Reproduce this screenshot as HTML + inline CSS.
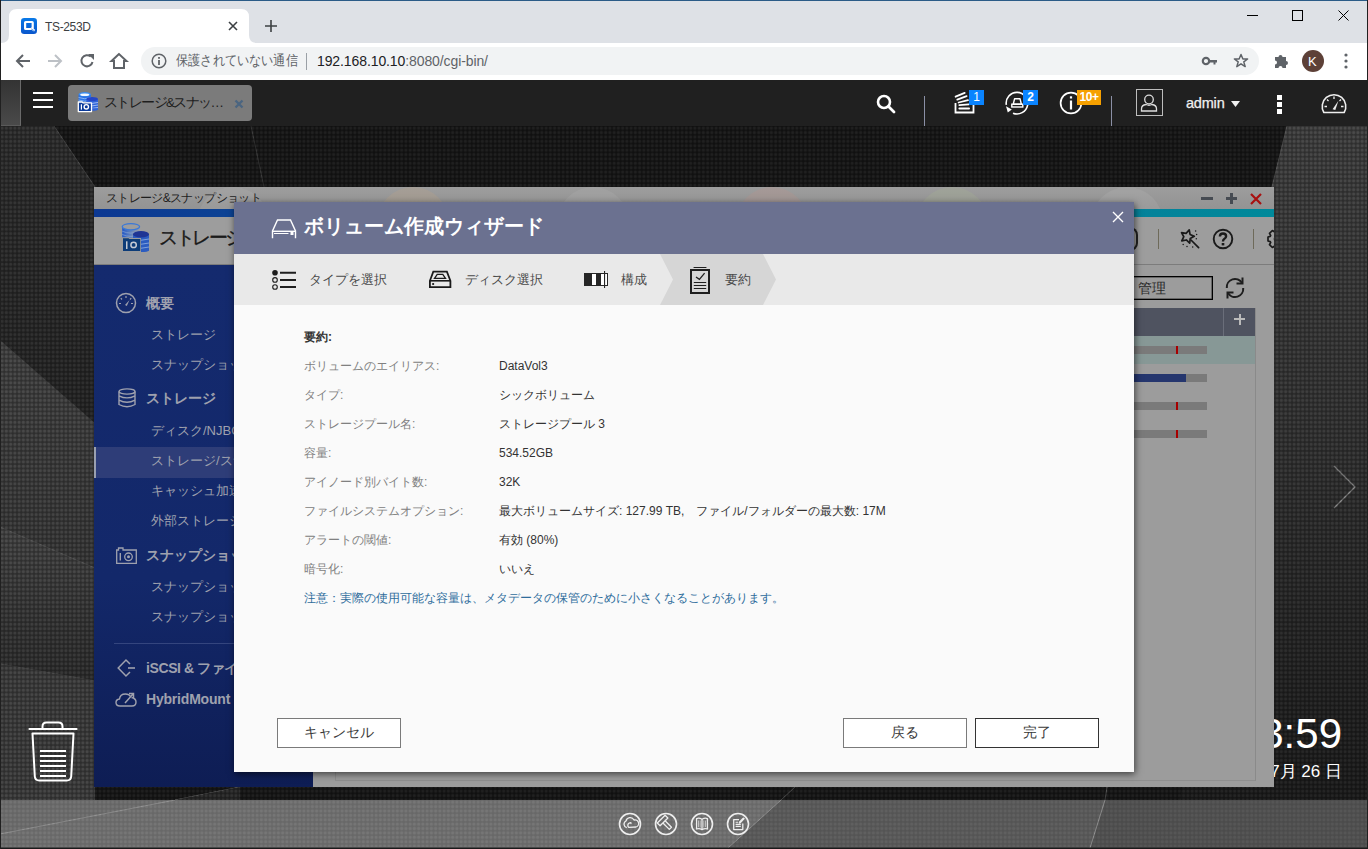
<!DOCTYPE html>
<html><head><meta charset="utf-8">
<style>
*{box-sizing:border-box;margin:0;padding:0}
html,body{width:1368px;height:849px;overflow:hidden;background:#1b1b1b;font-family:"Liberation Sans",sans-serif}
.a{position:absolute}
svg{display:block;position:absolute;overflow:visible}
.t{position:absolute;white-space:nowrap;line-height:1}
/* chrome */
#tabstrip{left:0;top:0;width:1368px;height:43px;background:#dee1e6;border-top:1px solid #2a5b87}
#toolbar{left:0;top:43px;width:1368px;height:36px;background:#fff}
#omni{left:141px;top:47px;width:1118px;height:28px;border-radius:14px;background:#f1f3f4}
/* qts bar */
#qbar{left:0;top:79px;width:1368px;height:47px;background:#202020}
/* desktop */
#desk{left:0;top:126px;width:1368px;height:674px;background:#1b1b1b;overflow:hidden}
#bbar{left:0;top:800px;width:1368px;height:49px;background:#5f5f5f;overflow:hidden}
/* window */
#win{left:94px;top:187px;width:1180px;height:600px;background:#9c9c9c;overflow:hidden}
#modal{left:234px;top:202px;width:900px;height:570px;background:#fafafa;box-shadow:1px 2px 7px rgba(0,0,0,.6);overflow:hidden}
.tex{position:absolute;left:0;top:0;width:100%;height:100%;background-image:radial-gradient(circle at center,rgba(255,255,255,0.045) 0,rgba(255,255,255,0.035) 1.1px,rgba(0,0,0,0.3) 2.1px);background-size:4.25px 4.4px;pointer-events:none}
</style></head><body>

<!-- ============ CHROME ============ -->
<div id="tabstrip" class="a">
  <!-- active tab -->
  <svg width="260" height="43" style="left:0;top:-1px">
    <path d="M1 43 Q9 43 9 35 L9 17 Q9 9 17 9 L241 9 Q249 9 249 17 L249 35 Q249 43 257 43 Z" fill="#fff"/>
  </svg>
  <!-- favicon -->
  <svg width="16" height="16" style="left:21px;top:17px" viewBox="0 0 16 16">
    <defs><linearGradient id="gfav" x1="0" y1="0" x2="0" y2="1"><stop offset="0" stop-color="#0a7ae8"/><stop offset="1" stop-color="#0a56cc"/></linearGradient></defs>
    <rect x="0" y="0" width="16" height="16" rx="3.2" fill="url(#gfav)"/>
    <rect x="4.1" y="4" width="7.6" height="7" rx="0.6" fill="none" stroke="#fff" stroke-width="2.2"/>
    <path d="M9.6 10.2L13.6 12.6" stroke="#fff" stroke-width="2"/>
    <path d="M10.2 10.9L13 12.6" stroke="#0a60d4" stroke-width="0.6"/>
  </svg>
  <div class="t" style="left:45px;top:20px;font-size:12px;letter-spacing:-0.35px;color:#3c4043">TS-253D</div>
  <svg width="10" height="10" style="left:228px;top:20px"><path d="M1 1L9 9M9 1L1 9" stroke="#3c4043" stroke-width="1.6"/></svg>
  <svg width="12" height="12" style="left:265px;top:19px"><path d="M6 0V12M0 6H12" stroke="#3c4043" stroke-width="1.6"/></svg>
  <!-- window controls -->
  <div class="a" style="left:1247px;top:14px;width:11px;height:1px;background:#000"></div>
  <svg width="11" height="11" style="left:1292px;top:9px"><rect x="0.5" y="0.5" width="10" height="10" fill="none" stroke="#000" stroke-width="1"/></svg>
  <svg width="11" height="11" style="left:1338px;top:9px"><path d="M0.5 0.5L10.5 10.5M10.5 0.5L0.5 10.5" stroke="#000" stroke-width="1"/></svg>
</div>
<div id="toolbar" class="a">
  <!-- back -->
  <svg width="16" height="16" style="left:15px;top:10px" viewBox="0 0 16 16"><path d="M15 8H2M8 2L2 8L8 14" fill="none" stroke="#5f6368" stroke-width="2"/></svg>
  <svg width="16" height="16" style="left:47px;top:10px" viewBox="0 0 16 16"><path d="M1 8H14M8 2L14 8L8 14" fill="none" stroke="#bdc1c6" stroke-width="2"/></svg>
  <svg width="16" height="16" style="left:79px;top:10px" viewBox="0 0 16 16"><path d="M13.5 9A5.6 5.6 0 1 1 11.8 3.6" fill="none" stroke="#5f6368" stroke-width="2"/><path d="M9 1L15 1L15 7Z" fill="#5f6368"/></svg>
  <svg width="18" height="18" style="left:110px;top:9px" viewBox="0 0 18 18"><path d="M9 2L1.5 9H4V16H14V9H16.5Z" fill="none" stroke="#5f6368" stroke-width="2" stroke-linejoin="miter"/></svg>
</div>
<div id="omni" class="a">
  <svg width="16" height="16" style="left:10px;top:6px" viewBox="0 0 16 16"><circle cx="8" cy="8" r="6.8" fill="none" stroke="#5f6368" stroke-width="1.5"/><rect x="7.1" y="7" width="1.8" height="5" fill="#5f6368"/><rect x="7.1" y="4" width="1.8" height="1.8" fill="#5f6368"/></svg>
  <div class="t" style="left:35px;top:6px;font-size:14px;color:#5f6368;transform:scaleX(0.87);transform-origin:0 0">保護されていない通信</div>
  <div class="a" style="left:165px;top:6px;width:1px;height:17px;background:#9aa0a6"></div>
  <div class="t" style="left:176px;top:7px;font-size:14px;letter-spacing:-0.1px;color:#202124">192.168.10.10<span style="color:#5f6368">:8080/cgi-bin/</span></div>
  <!-- key -->
  <svg width="16" height="10" style="left:1061px;top:9px" viewBox="0 0 16 10"><circle cx="4" cy="5" r="3.2" fill="none" stroke="#5f6368" stroke-width="2.2"/><path d="M7 4H15V6.5H13.5V8.5H11.5V6.5H7Z" fill="#5f6368"/></svg>
  <!-- star -->
  <svg width="16" height="16" style="left:1092px;top:6px" viewBox="0 0 16 16"><path d="M8 1.5L9.9 6H14.6L10.8 8.9L12.2 13.6L8 10.8L3.8 13.6L5.2 8.9L1.4 6H6.1Z" fill="none" stroke="#5f6368" stroke-width="1.5" stroke-linejoin="round"/></svg>
</div>
<div class="a" style="left:0;top:43px;width:1368px;height:36px">
  <!-- puzzle -->
  <svg width="16" height="16" style="left:1273px;top:10px" viewBox="0 0 16 16"><path d="M2 4H5.5A2 2 0 1 1 9.5 4H13V8A2 2 0 1 1 13 12V15H9.5A2 2 0 1 0 5.5 15H2V11.5A2 2 0 1 0 2 7.5Z" fill="#5f6368"/></svg>
  <div class="a" style="left:1302px;top:7px;width:22px;height:22px;border-radius:50%;background:#5d4037"></div>
  <div class="t" style="left:1308px;top:12px;font-size:13px;color:#fff">K</div>
  <svg width="4" height="16" style="left:1344px;top:10px"><circle cx="2" cy="2" r="1.6" fill="#5f6368"/><circle cx="2" cy="8" r="1.6" fill="#5f6368"/><circle cx="2" cy="14" r="1.6" fill="#5f6368"/></svg>
</div>

<!-- ============ QTS BAR ============ -->
<div id="qbar" class="a">
  <div class="a" style="left:0;top:1px;width:21px;height:46px;background:linear-gradient(180deg,#333,#4a4a4a);border-right:1px solid #6a6a6a;border-bottom:1px solid #5a5a5a"></div>
  <div class="a" style="left:33px;top:12.7px;width:19.5px;height:2.5px;background:#fff"></div>
  <div class="a" style="left:33px;top:19.7px;width:19.5px;height:2.5px;background:#fff"></div>
  <div class="a" style="left:33px;top:26.7px;width:19.5px;height:2.5px;background:#fff"></div>
  <!-- app tab -->
  <div class="a" style="left:68px;top:6px;width:184px;height:36px;border-radius:4px;background:#7b7b7b"></div>
  <svg width="22" height="22" style="left:77px;top:13px" viewBox="0 0 22 22">
    <rect x="1.6" y="2.2" width="12.3" height="7.5" fill="#2a72e6"/>
    <path d="M1.6 5.5Q7.75 8 13.9 5.5M1.6 8Q7.75 10.5 13.9 8" fill="none" stroke="#8fbaf5" stroke-width="0.9"/>
    <ellipse cx="7.75" cy="2.3" rx="6.15" ry="2.2" fill="#3d8ef0"/>
    <ellipse cx="7.75" cy="2.7" rx="4.6" ry="1.3" fill="#f4f8ff"/>
    <rect x="9.3" y="7" width="11.7" height="10.5" fill="#2f62d8"/>
    <path d="M9.3 10.5Q15 12.3 21 10.5M9.3 13Q15 14.8 21 13M9.3 15.5Q15 17.3 21 15.5" fill="none" stroke="#a8c4f5" stroke-width="0.9"/>
    <ellipse cx="15.15" cy="17.5" rx="5.85" ry="1.3" fill="#2f62d8"/>
    <ellipse cx="15.15" cy="7" rx="5.85" ry="2" fill="#2446c8"/>
    <path d="M1.3 19.6V10H5.2L6 10.8H14.5V19.6Z" fill="#0a3a9a" stroke="#fff" stroke-width="1.3" stroke-linejoin="round"/>
    <rect x="3.8" y="12.3" width="1.2" height="5.3" fill="#fff"/>
    <circle cx="9.3" cy="14.8" r="2.2" fill="none" stroke="#fff" stroke-width="1.4"/>
  </svg>
  <div class="t" style="left:104px;top:17px;font-size:13.5px;letter-spacing:-1.6px;color:#1e1e1e">ストレージ&amp;スナッ<span style="letter-spacing:0">…</span></div>
  <svg width="10" height="10" style="left:234px;top:20px"><path d="M1.5 1.5L8.5 8.5M8.5 1.5L1.5 8.5" stroke="#4b6580" stroke-width="2.4"/></svg>

  <!-- search -->
  <svg width="20" height="20" style="left:876px;top:15px" viewBox="0 0 20 20"><circle cx="8" cy="8" r="6" fill="none" stroke="#fff" stroke-width="2.6"/><path d="M12.5 12.5L18 18" stroke="#fff" stroke-width="2.8" stroke-linecap="round"/></svg>
  <div class="a" style="left:924px;top:17px;width:1px;height:30px;background:#8b90a6"></div>
  <!-- tasks -->
  <svg width="22" height="22" style="left:954px;top:13px" viewBox="0 0 22 22">
    <path d="M1.5 11V20.5H19.5V13" fill="none" stroke="#fff" stroke-width="1.8"/>
    <path d="M1.6 4.7L10.7 0.9M3.3 7.6L12.6 4.1M4.6 10.5L14 8.1M5.3 13.1L14.8 12.3M5.3 16.5H15.1" stroke="#fff" stroke-width="1.8" stroke-linecap="round"/>
  </svg>
  <div class="a" style="left:969px;top:11px;width:15px;height:15px;background:#0a84ff"></div>
  <div class="t" style="left:969px;top:12px;width:15px;text-align:center;font-size:12px;color:#fff">1</div>
  <!-- sync -->
  <svg width="24" height="24" style="left:1005px;top:13px" viewBox="0 0 24 24">
    <path d="M1.3 12.8A10.8 10.8 0 1 1 8 21.2" fill="none" stroke="#fff" stroke-width="1.6"/>
    <path d="M1.0 14.2L6.8 17.4L2.8 20.6Z" fill="#fff"/>
    <path d="M8.2 12.2L9.6 6.8H15L16.4 12.2Z" fill="none" stroke="#fff" stroke-width="1.4" stroke-linejoin="round"/>
    <rect x="6.8" y="12.2" width="11" height="2.8" fill="none" stroke="#fff" stroke-width="1.4"/>
  </svg>
  <div class="a" style="left:1023px;top:11px;width:15px;height:15px;background:#0a84ff"></div>
  <div class="t" style="left:1023px;top:12px;width:15px;text-align:center;font-size:12px;font-weight:bold;color:#fff">2</div>
  <!-- info -->
  <svg width="24" height="24" style="left:1059px;top:12px" viewBox="0 0 24 24">
    <circle cx="12" cy="12" r="10.4" fill="none" stroke="#fff" stroke-width="1.7"/>
    <rect x="10.9" y="9.5" width="2.2" height="9" fill="#fff"/><rect x="10.9" y="5.3" width="2.2" height="2.2" fill="#fff"/>
  </svg>
  <div class="a" style="left:1077px;top:11px;width:24px;height:15px;background:#f6a000"></div>
  <div class="t" style="left:1077px;top:12px;width:24px;text-align:center;font-size:12px;font-weight:bold;color:#fff;letter-spacing:-0.4px">10+</div>
  <div class="a" style="left:1111px;top:17px;width:1px;height:30px;background:#8b90a6"></div>
  <!-- user -->
  <div class="a" style="left:1136px;top:10px;width:27px;height:27px;border:1px solid #bdbdbd"></div>
  <svg width="18" height="18" style="left:1140px;top:15px" viewBox="0 0 18 18"><circle cx="9" cy="5.5" r="4.3" fill="none" stroke="#ddd" stroke-width="1.3"/><path d="M1.5 17V15Q1.5 11 6 10.5Q9 12 12 10.5Q16.5 11 16.5 15V17Z" fill="none" stroke="#ddd" stroke-width="1.3"/></svg>
  <div class="t" style="left:1186px;top:17px;font-size:14.5px;letter-spacing:-0.2px;color:#f0f0f0;-webkit-text-stroke:0.25px #f0f0f0">admin</div>
  <svg width="9" height="6" style="left:1231px;top:101px;top:22px"><path d="M0 0H9L4.5 6Z" fill="#f0f0f0"/></svg>
  <div class="a" style="left:1277px;top:16px;width:5px;height:5px;background:#fff"></div>
  <div class="a" style="left:1277px;top:23px;width:5px;height:5px;background:#fff"></div>
  <div class="a" style="left:1277px;top:30px;width:5px;height:5px;background:#fff"></div>
  <!-- gauge -->
  <svg width="26" height="21" style="left:1321px;top:15px" viewBox="0 0 26 21">
    <path d="M2.84 18.5A11.8 11.8 0 1 1 23.16 18.5Z" fill="none" stroke="#eee" stroke-width="1.6" stroke-linejoin="round"/>
    <path d="M13 2.5V5M6 5.5L7.5 7M20 5.5L18.5 7M3.5 12.5H6M20 12.5H22.5" stroke="#eee" stroke-width="1.3"/>
    <path d="M11.6 15.2L17.4 6.8L14.3 16Z" fill="#eee"/>
  </svg>
</div>

<div class="a" style="left:0;top:79px;width:1368px;height:1px;background:#fff"></div>
<!-- ============ DESKTOP ============ -->
<div id="desk" class="a">
  <svg width="1368" height="674" style="left:0;top:0">
    <defs>
      <linearGradient id="gR" x1="0" y1="0" x2="0" y2="1">
        <stop offset="0" stop-color="#434343"/><stop offset="0.45" stop-color="#353535"/><stop offset="0.85" stop-color="#222"/><stop offset="1" stop-color="#1c1c1c"/>
      </linearGradient>
      <linearGradient id="gL2" x1="0" y1="0" x2="0" y2="1">
        <stop offset="0" stop-color="#464646"/><stop offset="1" stop-color="#3a3a3a"/>
      </linearGradient>
      <linearGradient id="gL3" x1="0" y1="0" x2="0" y2="1">
        <stop offset="0" stop-color="#484848"/><stop offset="1" stop-color="#2e2e2e"/>
      </linearGradient>
      <linearGradient id="gL1" x1="0" y1="0" x2="0" y2="1">
        <stop offset="0" stop-color="#303030"/><stop offset="1" stop-color="#262626"/>
      </linearGradient>
    </defs>
    <rect x="0" y="0" width="1368" height="674" fill="#171717"/>
    <!-- left upper facet -->
    <path d="M0 0H54L95 61L95 297L0 214Z" fill="url(#gL1)"/>
    <path d="M54 0L95 61" stroke="#4a4a4a" stroke-width="1"/>
    <path d="M251 0L264 61" stroke="#3a3a3a" stroke-width="1"/>
    <!-- left middle facet -->
    <path d="M0 214L95 297V442L0 401Z" fill="url(#gL2)"/>
    <path d="M0 401L95 442V555L0 538Z" fill="url(#gL3)"/>
    <path d="M0 401L95 442" stroke="#555" stroke-width="1"/>
    <path d="M0 538L95 555" stroke="#505050" stroke-width="1"/>
    <path d="M0 538L95 555V674H0Z" fill="#404040"/>
    <!-- right facet -->
    <path d="M1287 0H1368V674H1180L1272 61Z" fill="url(#gR)"/>
    <path d="M1287 0L1272 61" stroke="#555" stroke-width="1"/>
    <path d="M175 674L240 661" stroke="#666" stroke-width="1"/><path d="M0 674H175L240 661V674Z" fill="#2a2a2a"/>
    <path d="M795 661L781 674" stroke="#555" stroke-width="1"/>
    <path d="M1107 661L1105 674" stroke="#555" stroke-width="1"/>
    <!-- chevron -->
    <path d="M1334 340L1355 361L1334 382" fill="none" stroke="#8a8a8a" stroke-width="1.3"/>
  </svg>
  <div class="tex"></div>
  <!-- trash -->
  <svg width="50" height="64" style="left:28px;top:594px" viewBox="0 0 50 64">
    <path d="M14.5 8.5V6.5Q14.5 2.5 18.5 2.5H30.5Q34.5 2.5 34.5 6.5V8.5" fill="none" stroke="#fff" stroke-width="2"/>
    <path d="M1.5 9H48.5" stroke="#fff" stroke-width="2.2" stroke-linecap="round"/>
    <path d="M4.5 13.5H45.5L43.2 56.5Q42.8 60.5 38.8 60.5H11.2Q7.2 60.5 6.8 56.5Z" fill="none" stroke="#fff" stroke-width="2" stroke-linejoin="round"/>
    <path d="M12 31H38M12 36H38M12 41H38M12 46H38M12 51H38M12 56H38" stroke="#fff" stroke-width="2"/>
  </svg>
  <!-- clock -->
  <div class="t" style="left:1192px;top:587px;font-size:42px;color:#fff;width:150px;text-align:right">3:59</div>
  <div class="t" style="left:1192px;top:637px;font-size:17px;color:#fff;width:150px;text-align:right">7月 26 日</div>
</div>
<div id="bbar" class="a">
  <svg width="1368" height="49" style="left:0;top:0">
    <rect width="1368" height="49" fill="#5e5e5e"/>
    <path d="M0 0H175L0 34Z" fill="#717171"/>
    <path d="M0 34L175 0H781L728 48H0Z" fill="#747474"/>
    <path d="M781 0H1105L1090 48H728Z" fill="#5e5e5e"/>
    <path d="M1105 0H1368V48H1090Z" fill="#545454"/>
    <path d="M0 34L175 0M781 0L728 48M1105 0L1090 48" stroke="#949494" stroke-width="1"/>
    <rect y="47.5" width="1368" height="1.5" fill="#1a1a1a"/>
  </svg>
  <div class="tex" style="height:47px;opacity:.35"></div>
  <svg width="1368" height="49" style="left:0;top:0">
    <g fill="none" stroke="#eee" stroke-width="1.6">
      <circle cx="630" cy="24" r="10.5"/><circle cx="666" cy="24" r="10.5"/><circle cx="702" cy="24" r="10.5"/><circle cx="738" cy="24" r="10.5"/>
    </g>
    <g fill="none" stroke="#eee" stroke-width="1.3" stroke-linejoin="round">
      <path d="M626.8 27.7A3.6 3.6 0 0 1 626 21A4.3 4.3 0 0 1 634 20A3.5 3.5 0 0 1 636 27L628.8 27.4A2.6 2.6 0 0 1 629.8 22.8A1.5 1.5 0 0 1 631.4 23.6"/>
      <path d="M667.9 18L665.1 15.2L657.3 23L660.1 25.8Z"/>
      <path d="M665.1 20.8L671.5 27.2L669.3 29.4L662.9 23"/>
      <path d="M702 19.2Q699 17.6 696.6 18.6V29Q699.3 28 702 29.6Q704.7 28 707.4 29V18.6Q705 17.6 702 19.2Z"/>
      <path d="M702 19.2V29.6"/>
      <path d="M698.5 20.5V27.2M700.2 20.5V27.5M703.8 20.5V27.5M705.5 20.5V27.2" stroke-width="0.8" opacity="0.8"/>
      <path d="M739 19.6H733.7V29.6H742.8V23.5"/>
      <path d="M735.6 22.2H738M735.6 24.4H740.8M735.6 26.4H740.8" stroke-width="1.1"/>
      <path d="M739.8 22.6L743.6 18.6" stroke-width="2.2" stroke-linecap="round"/>
    </g>
  </svg>
</div>

<!-- ============ WINDOW ============ -->
<div id="win" class="a">
  <!-- title bar -->
  <div class="a" style="left:0;top:0;width:1180px;height:22px;background:linear-gradient(180deg,#9d9d9d,#939393)"></div>
  <svg width="1180" height="22" style="left:0;top:0">
    <g opacity="0.13">
      <circle cx="139" cy="36" r="36" fill="#c8c8c8"/>
      <circle cx="319" cy="36" r="36" fill="#e6b070"/>
      <circle cx="499" cy="36" r="36" fill="#c8c8c8"/>
      <circle cx="678" cy="36" r="36" fill="#e08a7a"/>
      <circle cx="858" cy="36" r="36" fill="#b8d08a"/>
      <circle cx="1033" cy="36" r="36" fill="#d0d0d0"/>
    </g>
  </svg>
  <div class="t" style="left:12px;top:5px;font-size:12px;letter-spacing:-0.65px;color:#1e1e1e">ストレージ&amp;スナップショット</div>
  <div class="a" style="left:1107px;top:10px;width:12px;height:3px;background:#464b52"></div>
  <div class="a" style="left:1132px;top:10px;width:11px;height:3px;background:#464b52"></div>
  <div class="a" style="left:1136px;top:6px;width:3px;height:11px;background:#464b52"></div>
  <svg width="12" height="12" style="left:1156px;top:6px"><path d="M1 1L11 11M11 1L1 11" stroke="#a81010" stroke-width="2.2"/></svg>
  <!-- strip -->
  <div class="a" style="left:0;top:22px;width:1180px;height:8px;background:linear-gradient(90deg,#0c3892 0%,#0c4a96 20%,#0a7a9a 75%,#00899a 100%)"></div>
  <!-- header -->
  <div class="a" style="left:0;top:30px;width:1180px;height:48px;background:#9d9d9d;border-bottom:1px solid #7c7c7c"></div>
  <svg width="28" height="30" style="left:28px;top:36px" viewBox="0 0 28 30">
    <defs><linearGradient id="gbk" x1="0" y1="0" x2="1" y2="0"><stop offset="0" stop-color="#1f56c8"/><stop offset="0.55" stop-color="#3a6fd0" stop-opacity="0.55"/><stop offset="1" stop-color="#6a8fd0" stop-opacity="0.15"/></linearGradient></defs>
    <path d="M0.2 3.7V14.5Q8.8 18.5 17.6 14.5V3.7A8.7 3.3 0 0 1 0.2 3.7Z" fill="url(#gbk)"/>
    <path d="M0.2 8.2Q8.8 12 17.6 8.2M0.2 11.5Q8.8 15.3 17.6 11.5" fill="none" stroke="#9db4d8" stroke-width="0.9" opacity="0.6"/>
    <ellipse cx="8.9" cy="3.7" rx="8.7" ry="3.1" fill="none" stroke="#3a78d8" stroke-width="1.3"/>
    <rect x="11" y="11.2" width="16" height="16.5" fill="#2c5cc0"/>
    <path d="M11 16Q19 18.5 27 16M11 20Q19 22.5 27 20M11 24Q19 26.5 27 24" fill="none" stroke="#7ea0dc" stroke-width="1"/>
    <ellipse cx="19" cy="27.5" rx="8" ry="1.6" fill="#2c5cc0"/>
    <ellipse cx="19" cy="11.2" rx="8" ry="3.2" fill="#1f3594"/>
    <path d="M0.3 29V14.2H7L8 15H19V29Z" fill="#9d9d9d"/>
    <path d="M1 28V15.2H6.6L7.5 16H18.2V28Z" fill="#0d3c78"/>
    <rect x="4" y="18.3" width="1.5" height="7.7" fill="#c4cad4"/>
    <circle cx="11.6" cy="21.9" r="2.7" fill="none" stroke="#c4cad4" stroke-width="1.5"/>
  </svg>
  <div class="t" style="left:65px;top:41px;font-size:19px;letter-spacing:-2.4px;color:#1a1a1a;-webkit-text-stroke:0.3px #1a1a1a">ストレージ&amp;スナップショット</div>
  <!-- toolbar right -->
  <div class="a" style="left:1034px;top:40px;width:10px;height:24px;border:2px solid #222;border-left:none;border-radius:0 8px 8px 0"></div>
  <div class="a" style="left:1064px;top:42px;width:1px;height:20px;background:#6e6a5a"></div>
  <svg width="22" height="22" style="left:1086px;top:42px" viewBox="0 0 22 22">
    <path d="M9.23 0.87L10.06 5.45L14.30 7.36L10.20 9.56L9.69 14.18L6.34 10.96L1.78 11.91L3.80 7.72L1.50 3.69L6.10 4.31Z" fill="none" stroke="#1a1a1a" stroke-width="1.7" stroke-linejoin="round"/>
    <path d="M11 11L18.6 18.6" stroke="#1a1a1a" stroke-width="1.7" stroke-linecap="round"/>
    <g fill="#1a1a1a"><circle cx="15.6" cy="2.1" r=".75"/><circle cx="16.6" cy="5.5" r=".75"/><circle cx="16.3" cy="9.8" r=".75"/><circle cx="3.2" cy="15.4" r=".75"/><circle cx="7" cy="17.4" r=".75"/><circle cx="12.7" cy="18" r=".75"/></g>
  </svg>
  <svg width="22" height="22" style="left:1118px;top:41px" viewBox="0 0 22 22">
    <circle cx="11" cy="11" r="9.3" fill="none" stroke="#1a1a1a" stroke-width="1.9"/>
    <path d="M7.9 8.6Q7.9 5.5 11 5.5Q14.1 5.5 14.1 8.3Q14.1 10 12.2 11Q11 11.7 11 13.4" fill="none" stroke="#1a1a1a" stroke-width="2.4"/>
    <rect x="9.7" y="15" width="2.6" height="2.4" fill="#1a1a1a"/>
  </svg>
  <div class="a" style="left:1159px;top:42px;width:1px;height:20px;background:#6e6a5a"></div>
  <svg width="30" height="25" style="left:1170px;top:40px" viewBox="0 0 30 25"><path d="M24.00 9.97L24.00 14.03L21.78 14.58L21.33 15.68L22.50 17.64L19.64 20.50L17.68 19.33L16.58 19.78L16.03 22.00L11.97 22.00L11.42 19.78L10.32 19.33L8.36 20.50L5.50 17.64L6.67 15.68L6.22 14.58L4.00 14.03L4.00 9.97L6.22 9.42L6.67 8.32L5.50 6.36L8.36 3.50L10.32 4.67L11.42 4.22L11.97 2.00L16.03 2.00L16.58 4.22L17.68 4.67L19.64 3.50L22.50 6.36L21.33 8.32L21.78 9.42Z" fill="none" stroke="#1a1a1a" stroke-width="1.7" stroke-linejoin="round"/><circle cx="14" cy="12" r="3.5" fill="none" stroke="#1a1a1a" stroke-width="1.6"/></svg>
  <!-- sidebar -->
  <div class="a" style="left:0;top:78px;width:219px;height:522px;background:linear-gradient(180deg,#142a6e 0%,#13286a 60%,#0e1d54 100%)"></div>
  <!-- content -->
  <div class="a" style="left:241px;top:89px;width:921px;height:505px;border-left:1px solid #8e8e8e;border-bottom:1px solid #8e8e8e"></div>
  <div class="a" style="left:920px;top:89px;width:199px;height:24px;border:1px solid #000;box-shadow:inset 0 0 0 0.5px #333"></div>
  <div class="t" style="left:1044px;top:94px;font-size:14px;color:#2a2a2a">管理</div>
  <svg width="20" height="24" style="left:1131px;top:89px" viewBox="0 0 20 24">
    <path d="M17.5 1.5V7.5H11.5" fill="none" stroke="#1e1e1e" stroke-width="2"/>
    <path d="M17 7A8.2 8.2 0 0 0 1.8 12" fill="none" stroke="#1e1e1e" stroke-width="2"/>
    <path d="M2.5 22.5V16.5H8.5" fill="none" stroke="#1e1e1e" stroke-width="2"/>
    <path d="M3 17A8.2 8.2 0 0 0 18.2 12" fill="none" stroke="#1e1e1e" stroke-width="2"/>
  </svg>
  <!-- table -->
  <div class="a" style="left:241px;top:121px;width:920px;height:28px;background:#4f5360"></div>
  <div class="a" style="left:1129px;top:121px;width:1px;height:28px;background:#6a6e7a"></div>
  <div class="a" style="left:1140px;top:131px;width:11px;height:2px;background:#bababa"></div>
  <div class="a" style="left:1144.5px;top:126.5px;width:2px;height:11px;background:#bababa"></div>
  <div class="a" style="left:241px;top:149px;width:920px;height:28px;background:#879896"></div>
  <div class="a" style="left:1161px;top:121px;width:1px;height:473px;background:#8a8a8a"></div>
  <!-- bars -->
  <div class="a" style="left:1000px;top:159px;width:113px;height:8px;background:#7a7a7a"></div>
  <div class="a" style="left:1082px;top:159px;width:2px;height:8px;background:#a80000"></div>
  <div class="a" style="left:1000px;top:187px;width:113px;height:8px;background:#7a7a7a"></div>
  <div class="a" style="left:1000px;top:187px;width:92px;height:8px;background:#25366e"></div>
  <div class="a" style="left:1000px;top:215px;width:113px;height:8px;background:#7a7a7a"></div>
  <div class="a" style="left:1082px;top:215px;width:2px;height:8px;background:#a80000"></div>
  <div class="a" style="left:1000px;top:243px;width:113px;height:8px;background:#7a7a7a"></div>
  <div class="a" style="left:1082px;top:243px;width:2px;height:8px;background:#a80000"></div>
  <!-- sidebar items (coords relative to window: x-94, y-187) -->
  <div class="a" style="left:0;top:260px;width:219px;height:31px;background:#2e3d78"></div>
  <div class="a" style="left:0;top:260px;width:2px;height:31px;background:#9aa0b0"></div>
  <svg width="22" height="22" style="left:21px;top:105px" viewBox="0 0 22 22">
    <circle cx="11" cy="11" r="9.5" fill="none" stroke="#9fa1ae" stroke-width="1.5"/>
    <path d="M11 4V6M5.8 6.2L7 7.5M16.2 6.2L15 7.5M4 11.5H6M16 11.5H18" stroke="#9fa1ae" stroke-width="1.2"/>
    <path d="M10 13L14.5 8L11.8 14Z" fill="#9fa1ae"/>
  </svg>
  <div class="t" style="left:52px;top:109px;font-size:14px;font-weight:bold;color:#9fa1ae">概要</div>
  <div class="t" style="left:57px;top:141px;font-size:13px;color:#9fa1ae">ストレージ</div>
  <div class="t" style="left:57px;top:171px;font-size:13px;color:#9fa1ae">スナップショット</div>
  <svg width="20" height="20" style="left:23px;top:201px" viewBox="0 0 20 20">
    <ellipse cx="10" cy="3.5" rx="8" ry="2.6" fill="none" stroke="#9fa1ae" stroke-width="1.4"/>
    <path d="M2 3.5V16.5Q10 21 18 16.5V3.5M2 7.8Q10 12 18 7.8M2 12.2Q10 16.4 18 12.2" fill="none" stroke="#9fa1ae" stroke-width="1.4"/>
  </svg>
  <div class="t" style="left:52px;top:204px;font-size:14px;font-weight:bold;color:#9fa1ae">ストレージ</div>
  <div class="t" style="left:57px;top:237px;font-size:13px;color:#9fa1ae">ディスク/NJBOD</div>
  <div class="t" style="left:57px;top:267px;font-size:13px;color:#9fa1ae">ストレージ/スナップショット</div>
  <div class="t" style="left:57px;top:297px;font-size:13px;color:#9fa1ae">キャッシュ加速</div>
  <div class="t" style="left:57px;top:327px;font-size:13px;color:#9fa1ae">外部ストレージ</div>
  <svg width="21" height="17" style="left:22px;top:360px" viewBox="0 0 21 17">
    <path d="M0.7 16.3V3H2.5V1H7V3H20.3V16.3Z" fill="none" stroke="#9fa1ae" stroke-width="1.3"/>
    <rect x="3.6" y="6" width="1.4" height="7.5" fill="#9fa1ae"/>
    <circle cx="12.5" cy="9.8" r="3.8" fill="none" stroke="#9fa1ae" stroke-width="1.3"/><circle cx="12.5" cy="9.8" r="1.5" fill="#9fa1ae"/>
  </svg>
  <div class="t" style="left:52px;top:361px;font-size:14px;font-weight:bold;color:#9fa1ae">スナップショット</div>
  <div class="t" style="left:57px;top:393px;font-size:13px;color:#9fa1ae">スナップショット</div>
  <div class="t" style="left:57px;top:423px;font-size:13px;color:#9fa1ae">スナップショット</div>
  <div class="a" style="left:20px;top:456px;width:199px;height:1px;background:#34457e"></div>
  <svg width="20" height="20" style="left:23px;top:472px" viewBox="0 0 20 20">
    <path d="M13 5L9 1L1.2 9L9 17L13 13" fill="none" stroke="#9fa1ae" stroke-width="1.5"/>
    <path d="M11 9H18" stroke="#9fa1ae" stroke-width="1.6"/>
  </svg>
  <div class="t" style="left:52px;top:474px;font-size:14px;font-weight:bold;letter-spacing:-0.4px;color:#9fa1ae">iSCSI &amp; ファイバーチャネル</div>
  <svg width="22" height="16" style="left:21px;top:504px" viewBox="0 0 22 16">
    <path d="M5 15Q1 15 1 11.5Q1 8.5 4.5 8Q5 3 10.5 3Q14 3 15.5 5.5" fill="none" stroke="#9fa1ae" stroke-width="1.4"/>
    <path d="M16.5 6.5Q21 7.5 21 11Q21 15 17 15H5" fill="none" stroke="#9fa1ae" stroke-width="1.4"/>
    <path d="M10 12L18 3M14 2.5H18.5V7" fill="none" stroke="#9fa1ae" stroke-width="1.5"/>
  </svg>
  <div class="t" style="left:52px;top:505px;font-size:14px;font-weight:bold;letter-spacing:-0.2px;color:#9fa1ae">HybridMount</div>
</div>

<!-- ============ MODAL ============ -->
<div id="modal" class="a">
  <div class="a" style="left:0;top:0;width:900px;height:52px;background:#6b7190"></div>
  <svg width="26" height="20" style="left:37px;top:17px" viewBox="0 0 26 20">
    <path d="M1.5 19.2V12L6.5 1H19.5L24.5 12V19.2" fill="none" stroke="#fff" stroke-width="1.4"/>
    <path d="M1.5 12.3H24.5" stroke="#fff" stroke-width="1.4"/>
    <path d="M3 14.5H17.5" stroke="#fff" stroke-width="1"/>
    <rect x="19.5" y="13" width="3" height="3" fill="#fff"/>
  </svg>
  <div class="t" style="left:70px;top:14px;font-size:20px;font-weight:bold;color:#fff">ボリューム作成ウィザード</div>
  <svg width="12" height="12" style="left:878px;top:9px"><path d="M1 1L11 11M11 1L1 11" stroke="#fff" stroke-width="1.4"/></svg>
  <!-- steps -->
  <div class="a" style="left:0;top:52px;width:900px;height:51px;background:#e9e9e9"></div>
  <svg width="900" height="51" style="left:0;top:52px">
    <path d="M426 0H529L542 25.5L529 51H426L439 25.5Z" fill="#d6d6d6"/>
  </svg>
  <svg width="26" height="20" style="left:37px;top:68px" viewBox="0 0 26 20">
    <circle cx="4" cy="2.8" r="2.8" fill="#1e1e1e"/>
    <circle cx="4" cy="9.9" r="2.3" fill="none" stroke="#1e1e1e" stroke-width="1.1"/>
    <circle cx="4" cy="17" r="2.3" fill="none" stroke="#1e1e1e" stroke-width="1.1"/>
    <path d="M9 2.8H25M9 9.9H25M9 17H25" stroke="#1e1e1e" stroke-width="2"/>
  </svg>
  <div class="t" style="left:75px;top:71px;font-size:13px;color:#4a4a4a">タイプを選択</div>
  <svg width="24" height="20" style="left:194px;top:68px" viewBox="0 0 24 20">
    <path d="M1.9 17.1V10.8L5.3 1.7H18.9L22.4 10.8V17.1Z" fill="none" stroke="#1a1a1a" stroke-width="1.8" stroke-linejoin="miter"/>
    <path d="M1.9 10.8H22.4" stroke="#1a1a1a" stroke-width="1.6"/>
    <path d="M6.5 8.4L9.2 4.4H14.8L17.5 8.4Z" fill="none" stroke="#1a1a1a" stroke-width="1.3"/>
    <rect x="4.2" y="13.1" width="1.9" height="1.8" fill="#1a1a1a"/>
  </svg>
  <div class="t" style="left:231px;top:71px;font-size:13px;color:#4a4a4a">ディスク選択</div>
  <svg width="26" height="19" style="left:349px;top:68px" viewBox="0 0 26 19">
    <rect x="1" y="3" width="24" height="13" fill="#262626"/>
    <rect x="9" y="4" width="4" height="11" fill="#fff"/>
    <rect x="18" y="4" width="3" height="11" fill="#fff"/>
    <rect x="22" y="4" width="2" height="11" fill="#fff"/>
    <rect x="21" y="1" width="1.1" height="17" fill="#262626"/>
  </svg>
  <div class="t" style="left:387px;top:71px;font-size:13px;color:#4a4a4a">構成</div>
  <svg width="20" height="28" style="left:456px;top:64px" viewBox="0 0 20 28">
    <path d="M4 1.5H16" stroke="#1e1e1e" stroke-width="1.1" stroke-linecap="round"/>
    <rect x="1" y="4" width="18" height="23" fill="none" stroke="#1e1e1e" stroke-width="2"/>
    <path d="M6 11L9.4 13.4L14.6 7.2" fill="none" stroke="#1e1e1e" stroke-width="1.3"/>
    <path d="M4.2 16.5H15.8M4.2 19.5H15.8M4.2 22.5H15.8" stroke="#1e1e1e" stroke-width="1" stroke-linecap="round"/>
  </svg>
  <div class="t" style="left:491px;top:71px;font-size:13px;color:#4a4a4a">要約</div>
  <!-- body -->
  <div class="t" style="left:70px;top:129px;font-size:12px;font-weight:bold;color:#333">要約:</div>
  <div class="t" style="left:70px;top:158px;font-size:12px;color:#808080">ボリュームのエイリアス:</div>
  <div class="t" style="left:265px;top:158px;font-size:12px;color:#333">DataVol3</div>
  <div class="t" style="left:70px;top:187px;font-size:12px;color:#808080">タイプ:</div>
  <div class="t" style="left:265px;top:187px;font-size:12px;color:#333">シックボリューム</div>
  <div class="t" style="left:70px;top:216px;font-size:12px;color:#808080">ストレージプール名:</div>
  <div class="t" style="left:265px;top:216px;font-size:12px;color:#333">ストレージプール 3</div>
  <div class="t" style="left:70px;top:245px;font-size:12px;color:#808080">容量:</div>
  <div class="t" style="left:265px;top:245px;font-size:12px;color:#333">534.52GB</div>
  <div class="t" style="left:70px;top:274px;font-size:12px;color:#808080">アイノード別バイト数:</div>
  <div class="t" style="left:265px;top:274px;font-size:12px;color:#333">32K</div>
  <div class="t" style="left:70px;top:303px;font-size:12px;color:#808080">ファイルシステムオプション:</div>
  <div class="t" style="left:265px;top:303px;font-size:12px;color:#333">最大ボリュームサイズ: 127.99 TB,　ファイル/フォルダーの最大数: 17M</div>
  <div class="t" style="left:70px;top:332px;font-size:12px;color:#808080">アラートの閾値:</div>
  <div class="t" style="left:265px;top:332px;font-size:12px;color:#333">有効 (80%)</div>
  <div class="t" style="left:70px;top:361px;font-size:12px;color:#808080">暗号化:</div>
  <div class="t" style="left:265px;top:361px;font-size:12px;color:#333">いいえ</div>
  <div class="t" style="left:70px;top:390px;font-size:12px;color:#2f6d9c">注意：実際の使用可能な容量は、メタデータの保管のために小さくなることがあります。</div>
  <!-- buttons -->
  <div class="a" style="left:43px;top:516px;width:124px;height:30px;background:#fff;border:1px solid #7a7a7a"></div>
  <div class="t" style="left:43px;top:523px;width:124px;text-align:center;font-size:14px;color:#3a3a3a">キャンセル</div>
  <div class="a" style="left:609px;top:516px;width:124px;height:30px;background:#fff;border:1px solid #7a7a7a"></div>
  <div class="t" style="left:609px;top:523px;width:124px;text-align:center;font-size:14px;color:#3a3a3a">戻る</div>
  <div class="a" style="left:741px;top:516px;width:124px;height:30px;background:#fff;border:1px solid #333"></div>
  <div class="t" style="left:741px;top:523px;width:124px;text-align:center;font-size:14px;color:#3a3a3a">完了</div>
</div>

<div class="a" style="left:0;top:0;width:1px;height:849px;background:#202020"></div>
<div class="a" style="left:1367px;top:0;width:1px;height:849px;background:#202020"></div>
</body></html>
